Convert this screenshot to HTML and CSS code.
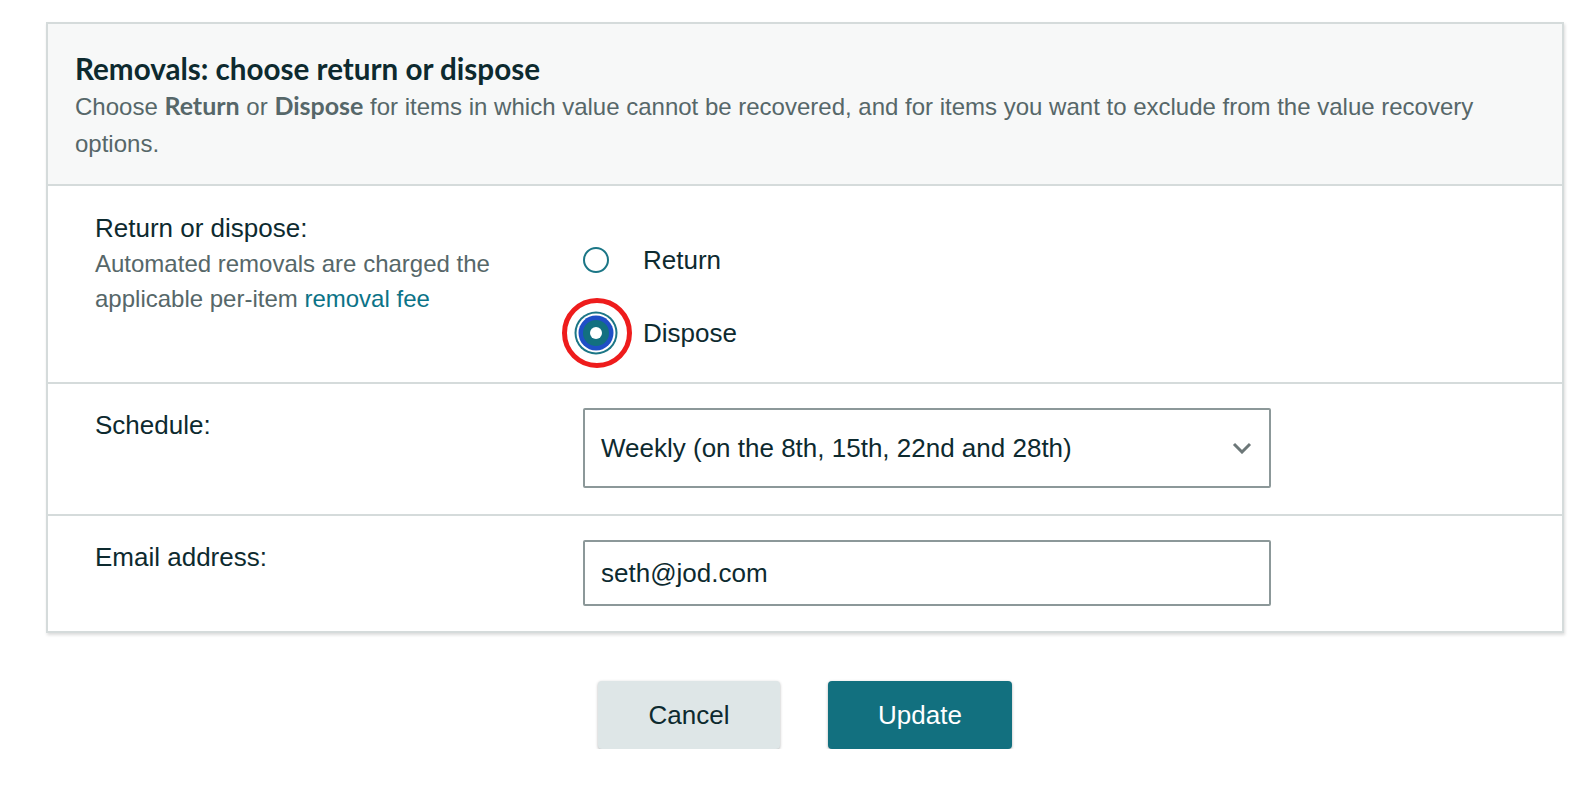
FILE: index.html
```html
<!DOCTYPE html>
<html lang="en">
<head>
<meta charset="utf-8">
<title>Removals</title>
<link rel="stylesheet" href="styles.css">
</head>
<body>
<div class="card">
  <div class="card-header">
    <h2 class="title">Removals: choose return or dispose</h2>
    <p class="desc">Choose <b>Return</b> or <b>Dispose</b> for items in which value cannot be recovered, and for items you want to exclude from the value recovery options.</p>
  </div>
  <div class="row">
    <div class="label-col">
      <div class="label">Return or dispose:</div>
      <div class="hint">Automated removals are charged the applicable per-item <a class="link" href="#">removal fee</a></div>
    </div>
    <div class="control-col">
      <div class="radios">
        <div class="radio"><span class="circle"></span><span class="radio-text">Return</span></div>
        <div class="radio checked"><span class="circle"><svg class="annotation" width="72" height="72" viewBox="0 0 72 72"><circle cx="36" cy="36" r="32.5" fill="none" stroke="#ee1c1c" stroke-width="5"/></svg></span><span class="radio-text">Dispose</span></div>
      </div>
    </div>
  </div>
  <div class="row">
    <div class="label-col">
      <div class="label">Schedule:</div>
    </div>
    <div class="control-col">
      <div class="select">
        <span class="select-text">Weekly (on the 8th, 15th, 22nd and 28th)</span>
        <svg class="chevron" width="20" height="12" viewBox="0 0 20 12"><path d="M2 2 L10 10 L18 2" fill="none" stroke="#6c7778" stroke-width="3"/></svg>
      </div>
    </div>
  </div>
  <div class="row">
    <div class="label-col">
      <div class="label">Email address:</div>
    </div>
    <div class="control-col">
      <div class="input">seth@jod.com</div>
    </div>
  </div>
</div>
<div class="actions">
  <button class="btn btn-cancel">Cancel</button>
  <button class="btn btn-update">Update</button>
</div>
</body>
</html>
```
FILE: styles.css
```css
* { box-sizing: border-box; }
body {
  margin: 0;
  background: #ffffff;
  font-family: "Liberation Sans", Arial, sans-serif;
  color: #0f2b30;
}
.card {
  margin: 22px 0 0 46px;
  width: 1518px;
  border: 2px solid #d5dbdb;
  background: #fff;
  box-shadow: 1px 2px 3px rgba(0, 0, 0, 0.14);
}
.card-header {
  background: #f7f8f8;
  padding: 27px 27px 22px 27px;
  border-bottom: 2px solid #d5dbdb;
}
.title {
  margin: 0;
  font-family: "Lato", sans-serif;
  font-weight: 700;
  font-size: 29.6px;
  line-height: 36px;
  color: #0d2a2f;
}
.desc {
  margin: 0;
  font-size: 24px;
  line-height: 37px;
  color: #566769;
}
.desc b {
  font-family: "Lato", sans-serif;
  font-weight: 700;
  font-size: 25px;
}
.row {
  display: grid;
  grid-template-columns: 488px 688px;
  padding: 25px 0 24px 47px;
  border-bottom: 2px solid #d5dbdb;
}
.row:nth-child(3) { padding-top: 24px; padding-bottom: 26px; }
.row:last-child { border-bottom: none; padding-top: 24px; padding-bottom: 25px; }
.label-col { padding-right: 40px; }
.label {
  font-size: 26px;
  line-height: 35px;
  color: #0d2a2f;
}
.hint {
  font-size: 24px;
  line-height: 35px;
  color: #566769;
}
.link { color: #0b7387; text-decoration: none; }
.radios {
  display: flex;
  flex-direction: column;
  gap: 37px;
  margin-top: 31px;
  padding-bottom: 7px;
}
.radio {
  display: flex;
  align-items: center;
  height: 36px;
  gap: 34px;
  font-size: 26px;
  color: #0d2a2f;
}
.circle {
  position: relative;
  width: 26px;
  height: 26px;
  border-radius: 50%;
  border: 2px solid #1b7686;
  background: #fff;
  flex: none;
}
.checked .circle {
  border: none;
  background: #127080;
  box-shadow: 0 0 0 4.5px #1f4fc6, 0 0 0 6.5px #ffffff, 0 0 0 8.5px #1b7686;
}
.checked .circle::after {
  content: "";
  position: absolute;
  left: 7px;
  top: 7px;
  width: 12px;
  height: 12px;
  border-radius: 50%;
  background: #fff;
}
.annotation {
  position: absolute;
  left: -22px;
  top: -23px;
}
.select, .input {
  width: 688px;
  border: 2px solid #8c9899;
  border-radius: 2px;
  background: #fff;
  font-size: 26px;
  color: #0d2a2f;
  padding: 0 17px 0 16px;
  display: flex;
  align-items: center;
}
.select { height: 80px; justify-content: space-between; }
.input { height: 66px; }
.actions {
  width: 1518px;
  margin: 48px 0 0 46px;
  display: flex;
  justify-content: center;
  gap: 48px;
}
.btn {
  height: 68px;
  border: none;
  border-radius: 4px;
  font-family: "Liberation Sans", Arial, sans-serif;
  font-size: 26px;
  box-shadow: 0 1px 3px rgba(0, 0, 0, 0.3);
}
.btn-cancel { width: 182px; background: #dee6e7; color: #0d2a2f; }
.btn-update { width: 184px; background: #12707f; color: #ffffff; }
```
